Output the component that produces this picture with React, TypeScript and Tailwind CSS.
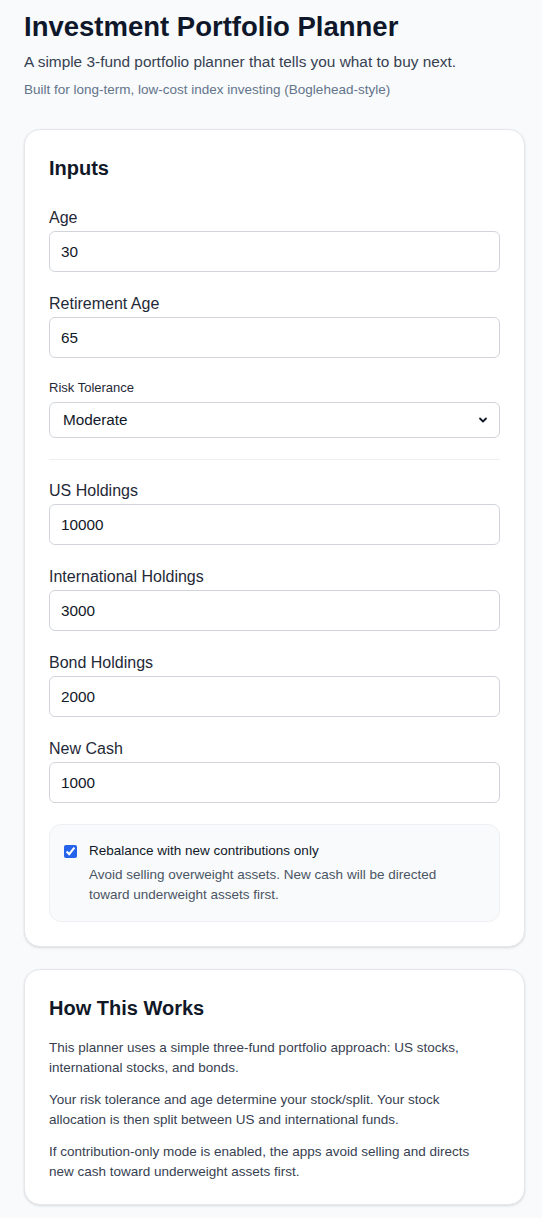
import React, { useState } from "react";

const font = { fontFamily: '"Liberation Sans", Arial, sans-serif' };

function Field({ label, value }: { label: string; value: string }) {
  return (
    <div>
      <label className="mb-[3px] block text-[16px] leading-5 text-[#1f2937]">{label}</label>
      <input
        defaultValue={value}
        className="block h-[41px] w-full rounded-md border border-[#d1d5db] bg-white px-[11px] text-[15.3px] text-[#111827] outline-none"
      />
    </div>
  );
}

export default function App() {
  const [contribOnly, setContribOnly] = useState(true);

  return (
    <div className="min-h-screen bg-[#f8fafc] pb-3 pl-6 pr-[17px] pt-[10px]" style={font}>
      <h1 className="text-[27.5px] font-bold leading-[34px] text-[#0f172a]">Investment Portfolio Planner</h1>
      <p className="mt-[8px] text-[15.4px] leading-5 text-[#374151]">
        A simple 3-fund portfolio planner that tells you what to buy next.
      </p>
      <p className="mt-[10px] text-[13.5px] leading-4 text-[#64748b]">
        Built for long-term, low-cost index investing (Boglehead-style)
      </p>

      <section className="mt-[31px] rounded-2xl border border-[#e5e7eb] bg-white p-6 shadow-sm">
        <h2 className="mb-[26px] text-[20px] font-bold leading-7 text-[#111827]">Inputs</h2>
        <div className="space-y-[22px]">
          <Field label="Age" value="30" />
          <Field label="Retirement Age" value="65" />
          <div>
            <label className="mb-[6px] block text-[13px] leading-4 text-[#1f2937]">Risk Tolerance</label>
            <div className="relative">
              <select
                defaultValue="Moderate"
                className="block h-9 w-full appearance-none rounded-md border border-[#d1d5db] bg-white pl-[13px] pr-8 text-[15.3px] text-[#111827] outline-none"
              >
                <option>Conservative</option>
                <option>Moderate</option>
                <option>Aggressive</option>
              </select>
              <svg
                className="pointer-events-none absolute right-[12px] top-1/2 -translate-y-1/2"
                width="10"
                height="10"
                viewBox="0 0 10 10"
                fill="none"
                stroke="#111827"
                strokeWidth="1.8"
                strokeLinecap="round"
                strokeLinejoin="round"
              >
                <path d="M2 3.5 L5 6.5 L8 3.5" />
              </svg>
            </div>
          </div>
        </div>

        <hr className="my-[21px] border-t border-[#eceef1]" />

        <div className="space-y-[22px]">
          <Field label="US Holdings" value="10000" />
          <Field label="International Holdings" value="3000" />
          <Field label="Bond Holdings" value="2000" />
          <Field label="New Cash" value="1000" />
        </div>

        <div className="mt-[21px] rounded-xl border border-[#eef0f3] bg-[#f8fafc] py-4 pl-[14px] pr-[28px]">
          <label className="flex items-start gap-3">
            <input
              type="checkbox"
              checked={contribOnly}
              onChange={(e) => setContribOnly(e.target.checked)}
              className="mt-[4px] h-[13px] w-[13px] shrink-0 accent-[#2563eb]"
            />
            <span>
              <span className="block text-[13.5px] leading-5 text-[#111827]">Rebalance with new contributions only</span>
              <span className="mt-[4px] block text-[13.5px] leading-5 text-[#4b5563]">
                Avoid selling overweight assets. New cash will be directed toward underweight assets first.
              </span>
            </span>
          </label>
        </div>
      </section>

      <section className="mt-[22px] rounded-2xl border border-[#e5e7eb] bg-white px-6 pb-[22px] pt-6 shadow-sm">
        <h2 className="mb-4 text-[20px] font-bold leading-7 text-[#111827]">How This Works</h2>
        <div className="space-y-3 pr-6 text-[13.5px] leading-5 text-[#374151]">
          <p>This planner uses a simple three-fund portfolio approach: US stocks, international stocks, and bonds.</p>
          <p>
            Your risk tolerance and age determine your stock/split. Your stock allocation is then split between US and
            international funds.
          </p>
          <p>
            If contribution-only mode is enabled, the apps avoid selling and directs new cash toward underweight assets
            first.
          </p>
        </div>
      </section>
    </div>
  );
}
